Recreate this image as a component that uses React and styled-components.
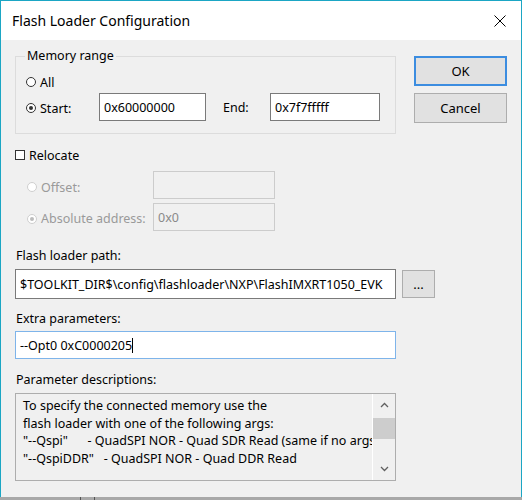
import React from 'react';
import styled, { createGlobalStyle } from 'styled-components';

const GlobalStyle = createGlobalStyle`
  html, body {
    margin: 0;
    padding: 0;
    background: #a8a8a8;
  }
  * {
    box-sizing: border-box;
  }
`;

const Window = styled.div({
  width: '522px',
  height: '497px',
  background: '#f0f0f0',
  border: '1px solid #1ba6c4',
  borderBottom: 'none',
  display: 'flex',
  flexDirection: 'column',
  fontFamily: '"Noto Sans", "Open Sans", sans-serif',
  fontSize: '12.5px',
  color: '#000'
});

const TitleBar = styled.div({
  height: '39px',
  background: '#fff',
  display: 'flex',
  alignItems: 'center',
  justifyContent: 'space-between',
  padding: '0 15px 0 11px',
  fontSize: '14px'
});

const Body = styled.div({
  display: 'flex',
  padding: '8px 14px 0 14px',
  gap: '18px'
});

const MainColumn = styled.div({
  width: '381px',
  display: 'flex',
  flexDirection: 'column'
});

const SideColumn = styled.div({
  display: 'flex',
  flexDirection: 'column',
  gap: '7px',
  paddingTop: '8px'
});

const GroupBox = styled.fieldset({
  margin: 0,
  padding: '10px 0 0 10px',
  height: '86px',
  border: '1px solid #dcdcdc',
  borderRadius: 0
});

const Legend = styled.legend({
  padding: '0 2px',
  marginLeft: '-1px',
  lineHeight: '16px'
});

const Row = styled.div({
  display: 'flex',
  alignItems: 'center',
  height: ({ h }) => h,
  marginTop: (p) => p.mt || 0
});

const OptionLabel = styled.label({
  display: 'flex',
  alignItems: 'center',
  gap: '4px',
  width: (p) => p.w || 'auto',
  paddingTop: (p) => p.pt || 0,
  color: (p) => (p.disabled ? '#9a9a9a' : '#000')
});

const RadioMark = styled.span`
  width: 10px;
  height: 10px;
  border-radius: 50%;
  border: 1px solid ${(p) => (p.disabled ? '#cfcfcf' : '#333')};
  background: #fff;
  display: inline-flex;
  align-items: center;
  justify-content: center;
  &::after {
    content: '';
    width: 4px;
    height: 4px;
    border-radius: 50%;
    background: ${(p) => (p.checked ? (p.disabled ? '#bcbcbc' : '#333') : 'transparent')};
  }
`;

const CheckMark = styled.span({
  width: '10px',
  height: '10px',
  border: '1px solid #333',
  background: '#fff',
  display: 'inline-block'
});

const TextBox = styled.div`
  width: ${(p) => p.w || '381px'};
  height: ${(p) => p.h || '28px'};
  border: 1px solid ${(p) => (p.focused ? '#7eb4ea' : p.disabled ? '#cccccc' : '#7a7a7a')};
  background: ${(p) => (p.disabled ? '#f0f0f0' : '#fff')};
  color: ${(p) => (p.disabled ? '#8a8a8a' : '#000')};
  display: flex;
  align-items: center;
  padding: 0 4px;
  white-space: pre;
  overflow: hidden;
`;

const Caret = styled.span({
  display: 'inline-block',
  width: '1px',
  height: '15px',
  background: '#000'
});

const FieldLabel = styled.div({
  lineHeight: '16px',
  marginTop: (p) => p.mt || 0,
  marginBottom: (p) => p.mb || 0,
  marginLeft: '1px'
});

const Button = styled.div`
  width: ${(p) => p.w || '93px'};
  height: ${(p) => p.h || '30px'};
  background: #e1e1e1;
  border: ${(p) => (p.primary ? '2px solid #3c8de0' : '1px solid #adadad')};
  display: flex;
  align-items: center;
  justify-content: center;
  font-size: 13px;
`;

const DescBox = styled.div({
  width: '381px',
  height: '88px',
  border: '1px solid #adadad',
  background: '#f0f0f0',
  display: 'flex',
  marginTop: '5px',
  overflow: 'hidden'
});

const DescText = styled.div({
  flex: 1,
  padding: '3px 0 0 7px',
  lineHeight: '17.7px',
  whiteSpace: 'pre',
  overflow: 'hidden'
});

const ScrollBar = styled.div({
  width: '23px',
  borderLeft: '1px solid #ffffff',
  display: 'flex',
  flexDirection: 'column',
  alignItems: 'stretch'
});

const ScrollArrow = styled.div({
  height: '22px',
  display: 'flex',
  alignItems: 'center',
  justifyContent: 'center'
});

const ScrollThumb = styled.div({
  height: '21px',
  background: '#cdcdcd',
  marginTop: '2px'
});

const Spacer = styled.div({
  flex: (p) => (p.h ? 'none' : 1),
  height: (p) => p.h || 'auto'
});

const Backdrop = styled.div({
  height: '3px',
  background: '#a8a8a8',
  display: 'flex'
});

const BackdropLine = styled.div({
  width: '1px',
  height: '3px',
  background: '#555',
  marginLeft: ({ ml }) => ml
});

function Chevron({ up }) {
  return (
    <svg width="9" height="6" viewBox="0 0 9 6">
      <path d={up ? 'M1 5 L4.5 1.5 L8 5' : 'M1 1 L4.5 4.5 L8 1'} fill="none" stroke="#606060" strokeWidth="1.3" />
    </svg>
  );
}

export default function App() {
  return (
    <>
      <GlobalStyle />
      <Window>
        <TitleBar>
          <span>Flash Loader Configuration</span>
          <svg width="12" height="12" viewBox="0 0 12 12">
            <path d="M0.5 0.5 L11.5 11.5 M11.5 0.5 L0.5 11.5" stroke="#000" strokeWidth="1" />
          </svg>
        </TitleBar>
        <Body>
          <MainColumn>
            <GroupBox>
              <Legend>Memory range</Legend>
              <Row h="16px">
                <OptionLabel><RadioMark />All</OptionLabel>
              </Row>
              <Row h="28px" mt="3px">
                <OptionLabel w="73px" pt="2px"><RadioMark checked />Start:</OptionLabel>
                <TextBox w="107px">0x60000000</TextBox>
                <OptionLabel w="64px" style={{ paddingLeft: '17px' }}>End:</OptionLabel>
                <TextBox w="110px">0x7f7fffff</TextBox>
              </Row>
            </GroupBox>
            <Row h="16px" mt="13px">
              <OptionLabel><CheckMark />Relocate</OptionLabel>
            </Row>
            <Row h="28px" mt="8px" style={{ paddingLeft: '12px' }}>
              <OptionLabel w="126px" pt="4px" disabled><RadioMark disabled />Offset:</OptionLabel>
              <TextBox w="122px" disabled />
            </Row>
            <Row h="28px" mt="4px" style={{ paddingLeft: '12px' }}>
              <OptionLabel w="126px" pt="3px" disabled><RadioMark disabled checked />Absolute address:</OptionLabel>
              <TextBox w="122px" disabled>0x0</TextBox>
            </Row>
            <FieldLabel mt="17px" mb="5px">Flash loader path:</FieldLabel>
            <TextBox h="30px">$TOOLKIT_DIR$\config\flashloader\NXP\FlashIMXRT1050_EVK</TextBox>
            <FieldLabel mt="12px" mb="4px">Extra parameters:</FieldLabel>
            <TextBox focused>--Opt0 0xC0000205<Caret /></TextBox>
            <FieldLabel mt="13px">Parameter descriptions:</FieldLabel>
            <DescBox>
              <DescText>
                {'To specify the connected memory use the\nflash loader with one of the following args:\n"--Qspi"      - QuadSPI NOR - Quad SDR Read (same if no args)\n"--QspiDDR"   - QuadSPI NOR - Quad DDR Read'}
              </DescText>
              <ScrollBar>
                <ScrollArrow><Chevron up /></ScrollArrow>
                <ScrollThumb />
                <Spacer />
                <ScrollArrow><Chevron /></ScrollArrow>
              </ScrollBar>
            </DescBox>
          </MainColumn>
          <SideColumn>
            <Button primary>OK</Button>
            <Button>Cancel</Button>
            <Spacer h="133px" />
            <Button w="33px" h="28px" style={{ marginLeft: '-12px' }}>...</Button>
          </SideColumn>
        </Body>
      </Window>
      <Backdrop>
        <BackdropLine ml="80px" />
        <BackdropLine ml="13px" />
      </Backdrop>
    </>
  );
}
